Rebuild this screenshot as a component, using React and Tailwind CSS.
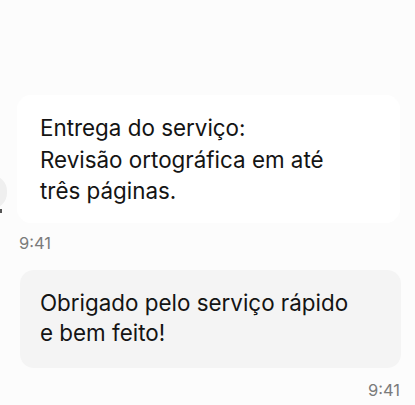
export default function App() {
  return (
    <div className="w-[415px] h-[405px] overflow-hidden bg-[#fcfcfc] text-[#141414] font-['Inter','Noto_Sans',sans-serif]">
      <div className="pt-[95px] flex flex-col">
        <div className="relative ml-[17px] mr-[15px]">
          <div className="absolute left-[-42px] top-[80px] w-[32px] h-[34px] rounded-full bg-[#efefef]" />
          <div className="absolute left-[-17px] top-[114px] w-[2px] h-[4px] bg-[#555555]" />
          <div className="rounded-[14px] bg-white pl-[23px] pr-4 pt-[17px] pb-[16px] text-[22.4px] leading-[31.5px]">
            <div>Entrega do serviço:</div>
            <div>Revisão ortográfica em até</div>
            <div>três páginas.</div>
          </div>
        </div>
        <div className="ml-[19px] mt-[10px] text-[16.5px] leading-[20px] text-[#7b7b7b]">9:41</div>
        <div className="ml-[20px] mr-[14px] mt-[17px] rounded-[14px] bg-[#f4f4f4] pl-[20px] pr-4 pt-[18px] pb-[20px] text-[22.4px] leading-[30px]">
          <div>Obrigado pelo serviço rápido</div>
          <div>e bem feito!</div>
        </div>
        <div className="mr-[15px] mt-[12px] self-end text-[16.5px] leading-[20px] text-[#7b7b7b]">9:41</div>
      </div>
    </div>
  );
}
